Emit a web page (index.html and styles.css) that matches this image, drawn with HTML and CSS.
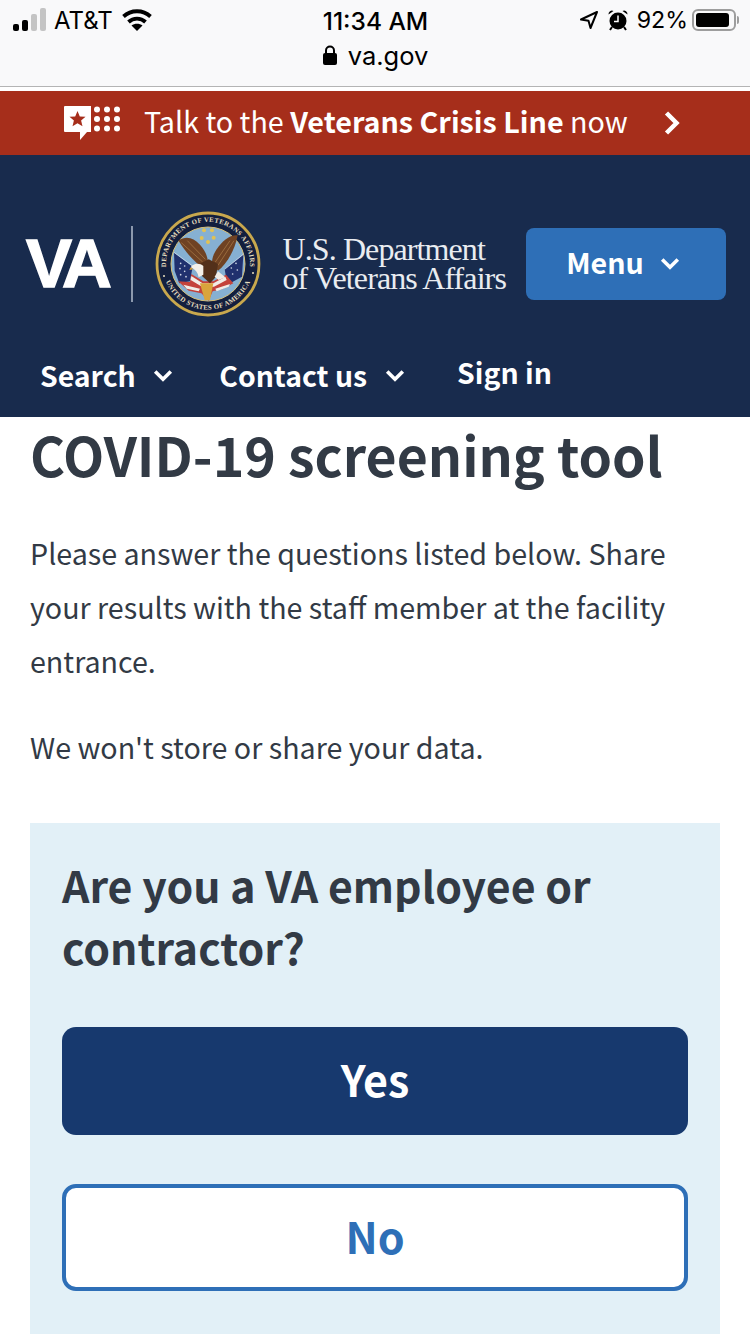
FILE: index.html
```html
<!DOCTYPE html>
<html lang="en">
<head>
<meta charset="utf-8">
<title>COVID-19 screening tool</title>
<link rel="stylesheet" href="styles.css">
</head>
<body>
<div class="browser-bar">
  <div class="status-row">
    <div class="status-left">
      <svg class="signal" width="36" height="24" viewBox="0 0 36 24"><rect x="0" y="16" width="6" height="7" rx="2" fill="#000"/><rect x="9" y="12" width="6" height="11" rx="2" fill="#000"/><rect x="18" y="6" width="6" height="17" rx="2" fill="#c4c4c4"/><rect x="27" y="0" width="6" height="23" rx="2" fill="#c4c4c4"/></svg>
      <span class="carrier">AT&amp;T</span>
      <svg class="wifi" width="30" height="24" viewBox="0 0 30 24"><path d="M1.500 8.500C9 1.500 21 1.500 28.500 8.500" fill="none" stroke="#000" stroke-width="3.800"/><path d="M6.500 14c4.800-4.500 12.200-4.500 17 0" fill="none" stroke="#000" stroke-width="3.800"/><path d="M15 23l-5.500-5.500c3-2.400 8-2.400 11 0z" fill="#000"/></svg>
    </div>
    <div class="clock">11:34 AM</div>
    <div class="status-right">
      <svg class="locate" width="20" height="20" viewBox="0 0 20 20"><path d="M18 2L2 9.500l7.500 1.200L11.500 18z" fill="none" stroke="#000" stroke-width="2" stroke-linejoin="round"/></svg>
      <svg class="alarm" width="22" height="22" viewBox="0 0 22 22"><circle cx="11" cy="12" r="8.500" fill="#000"/><path d="M11 6.500V12.500H7" fill="none" stroke="#fff" stroke-width="1.500"/><path d="M1.500 5.500a3.500 3.500 0 0 1 5-3.500zM20.500 5.500a3.500 3.500 0 0 0-5-3.500z" fill="#000"/><path d="M5 18l-2 3M17 18l2 3" stroke="#000" stroke-width="2"/></svg>
      <span class="battery-pct">92%</span>
      <span class="battery"><span class="battery-fill"></span></span>
      <span class="battery-cap"></span>
    </div>
  </div>
  <div class="url-row">
    <svg class="lock" width="16" height="22" viewBox="0 0 16 22"><path d="M4 10V6.500a4 4 0 0 1 8 0V10" fill="none" stroke="#000" stroke-width="2"/><rect x="1" y="9" width="14" height="12" rx="2" fill="#000"/></svg>
    <span>va.gov</span>
  </div>
</div>

<a class="crisis" href="#">
  <svg class="crisis-icon" width="58" height="36" viewBox="0 0 58 36"><path d="M1 2a1 1 0 0 1 1-1h26v26H24l-7 8v-8H2a1 1 0 0 1-1-1z" fill="#fff"/><path d="M14.500 6l2.300 5.400 5.700.4-4.400 3.700 1.400 5.700-5-3-5 3 1.400-5.700-4.400-3.700 5.700-.4z" fill="#a62e1b"/><g fill="#fff"><circle cx="34" cy="4.500" r="3"/><circle cx="44" cy="4.500" r="3"/><circle cx="54" cy="4.500" r="3"/><circle cx="34" cy="14" r="3"/><circle cx="44" cy="14" r="3"/><circle cx="54" cy="14" r="3"/><circle cx="34" cy="23.500" r="3"/><circle cx="44" cy="23.500" r="3"/><circle cx="54" cy="23.500" r="3"/></g></svg>
  <span class="crisis-text">Talk to the <b>Veterans Crisis Line</b> now</span>
  <svg class="crisis-chevron" width="18" height="26" viewBox="0 0 18 26"><path d="M3.500 3l10 10-10 10" fill="none" stroke="#fff" stroke-width="4.500"/></svg>
</a>

<header class="site-header">
  <div class="brand-row">
    <div class="brand">
      <span class="va-mark">VA</span>
      <span class="brand-rule"></span>
      <svg class="seal" width="106" height="106" viewBox="5 5 106 106">
        <defs>
          <path id="arc-top" d="M20.100 76A42 42 0 1 1 95.900 76"/>
          <path id="arc-bottom" d="M14 70A45.600 45.600 0 0 0 102 70"/>
        </defs>
        <circle cx="58" cy="58" r="52.500" fill="#131f3e"/>
        <circle cx="58" cy="58" r="51" fill="none" stroke="#c8a84e" stroke-width="2.800"/>
        <circle cx="58" cy="58" r="37" fill="#86b0d2" stroke="#d8c078" stroke-width="1"/>
        <text class="seal-text"><textPath href="#arc-top" startOffset="50%" text-anchor="middle">DEPARTMENT OF VETERANS AFFAIRS</textPath></text>
        <text class="seal-text"><textPath href="#arc-bottom" startOffset="50%" text-anchor="middle">UNITED STATES OF AMERICA</textPath></text>
        <circle cx="14" cy="70" r="1" fill="#e8dfc0"/>
        <circle cx="103" cy="67" r="1" fill="#e8dfc0"/>
        <g transform="scale(.3333)">
          <g fill="#e2c253"><circle cx="162" cy="73" r="6"/><circle cx="186" cy="73" r="6"/><circle cx="155" cy="96" r="6"/><circle cx="191" cy="95" r="6"/><circle cx="174" cy="108" r="6"/></g>
          <path d="M72 140L128 182 120 226 88 232 74 195z" fill="#20306e"/>
          <path d="M280 146L224 190 232 236 276 212z" fill="#20306e"/>
          <path d="M72 139L128 180" stroke="#dfe6ee" stroke-width="2" fill="none"/>
          <path d="M281 144L224 190" stroke="#dfe6ee" stroke-width="2" fill="none"/>
          <g fill="#d5dbe8"><circle cx="92" cy="172" r="2.500"/><circle cx="104" cy="180" r="2.500"/><circle cx="90" cy="188" r="2.500"/><circle cx="104" cy="196" r="2.500"/><circle cx="92" cy="206" r="2.500"/><circle cx="108" cy="212" r="2.500"/><circle cx="244" cy="186" r="2.500"/><circle cx="258" cy="172" r="2.500"/><circle cx="248" cy="204" r="2.500"/><circle cx="262" cy="192" r="2.500"/></g>
          <path d="M84 226L120 228 124 204 160 226 190 226 228 206 250 232 216 250 188 256 176 284 154 262 116 254z" fill="#c4423b"/>
          <path d="M124 210L158 232 190 232 226 212 230 222 192 242 156 242 122 222zM100 236L150 248 146 256 110 248zM196 248L240 234 236 242 200 256z" fill="#f1ece6"/>
          <path d="M85 103C110 88 130 95 150 116 164 132 172 148 174 168L160 188C140 172 110 146 85 103z" fill="#6f4223"/>
          <path d="M263 88C238 86 216 106 200 130 190 146 186 156 186 172L204 194C228 176 254 136 263 88z" fill="#6f4223"/>
          <path d="M94 110L158 168M112 104L166 160M240 104L196 168M252 104L204 178" stroke="#9a6b3e" stroke-width="3" fill="none"/>
          <path d="M148 174L176 160 204 174 198 212 180 232 156 210z" fill="#53301a"/>
          <path d="M122 184C130 170 150 170 160 180L160 206 146 214C144 200 136 190 122 184z" fill="#f4f0e9"/>
          <path d="M122 184l-4 8 12-2z" fill="#dfa534"/>
          <path d="M150 232L190 232 180 282 164 282z" fill="#d9a43b"/>
          <path d="M204 196L226 214 206 222 194 212z" fill="#f1ece6"/>
        </g>
      </svg>
      <div class="dept"><div>U.S. Department</div><div>of Veterans Affairs</div></div>
    </div>
    <button class="menu-btn" type="button"><span class="menu-label">Menu</span>
      <svg width="20" height="14" viewBox="0 0 20 14"><path d="M2.200 2.500L10 10.300 17.800 2.500" fill="none" stroke="#fff" stroke-width="3.600"/></svg>
    </button>
  </div>
  <nav class="nav-row">
    <a class="nav-item" href="#">Search
      <svg width="20" height="14" viewBox="0 0 20 14"><path d="M2.200 2.500L10 10.300 17.800 2.500" fill="none" stroke="#fff" stroke-width="3.600"/></svg>
    </a>
    <a class="nav-item" href="#">Contact us
      <svg width="20" height="14" viewBox="0 0 20 14"><path d="M2.200 2.500L10 10.300 17.800 2.500" fill="none" stroke="#fff" stroke-width="3.600"/></svg>
    </a>
    <a class="nav-item sign-in" href="#">Sign in</a>
  </nav>
</header>

<main class="content">
  <h1>COVID-19 screening tool</h1>
  <p class="intro">Please answer the questions listed below. Share your results with the staff member at the facility entrance.</p>
  <p class="note">We won't store or share your data.</p>
  <section class="question">
    <h2>Are you a VA employee or contractor?</h2>
    <button class="answer yes" type="button">Yes</button>
    <button class="answer no" type="button">No</button>
  </section>
</main>
</body>
</html>
```
FILE: styles.css
```css
* { box-sizing: border-box; }
html, body { margin: 0; padding: 0; }
body {
  width: 750px;
  height: 1334px;
  overflow: hidden;
  background: #fff;
  font-family: "Noto Sans CJK SC", "Source Sans Pro", "Open Sans", sans-serif;
  color: #323a45;
}
a { color: inherit; text-decoration: none; }

.browser-bar {
  height: 87px;
  background: #f9f9fa;
  border-bottom: 1px solid #b4b4b4;
  font-family: Inter, "Liberation Sans", sans-serif;
  color: #000;
  margin-bottom: 4px;
}
.status-row {
  height: 40px;
  padding: 0 11px 0 13px;
  display: grid;
  grid-template-columns: 1fr auto 1fr;
  align-items: center;
}
.status-left { display: flex; align-items: center; }
.signal { margin-right: 5px; }
.carrier { font-size: 24px; margin-right: 9px; }
.clock { font-size: 24.500px; font-weight: 500; padding: 2px 1px 0 0; }
.status-right { display: flex; align-items: center; justify-content: flex-end; }
.locate { margin-right: 8px; }
.alarm { margin-right: 7.500px; }
.battery-pct { font-size: 23.200px; margin-right: 4px; }
.battery {
  width: 44px; height: 22px;
  border: 2px solid #9d9d9d;
  border-radius: 6px;
  padding: 2px;
  display: block;
}
.battery-fill { display: block; height: 100%; width: 92%; background: #000; border-radius: 3px; }
.battery-cap { width: 2px; height: 8px; background: #9d9d9d; margin-left: 1px; border-radius: 0 2px 2px 0; }
.url-row {
  display: flex;
  justify-content: center;
  align-items: center;
  gap: 10px;
  font-size: 25.500px;
  height: 30px;
}

.crisis {
  height: 64px;
  background: #a62e1b;
  color: #fff;
  display: flex;
  align-items: center;
  padding-left: 63px;
}
.crisis-icon { margin-right: 23px; }
.crisis-text { font-size: 28.700px; line-height: 1; padding-bottom: 3px; }
.crisis-text b { font-weight: 700; }
.crisis-chevron { margin-left: 35px; }

.site-header { height: 262px; background: #182b4d; color: #fff; }
.brand-row {
  display: flex;
  align-items: center;
  padding: 56px 24px 0 26px;
  justify-content: space-between;
}
.brand { display: flex; align-items: center; }
.va-mark {
  font-family: "Liberation Sans", Arial, sans-serif;
  font-weight: 700;
  font-size: 69px;
  line-height: 72px;
  letter-spacing: -5px;
  width: 105px;
  -webkit-text-stroke: 1.500px #fff;
}
.brand-rule { width: 1.500px; height: 76px; background: #8c99ae; margin-right: 22.500px; }
.seal { display: block; margin-right: 21.500px; }
.seal-text { font-family: "Liberation Serif", serif; font-size: 6.800px; font-weight: 700; fill: #e8dfc0; letter-spacing: .35px; }
.dept {
  font-family: "Liberation Serif", serif;
  font-size: 32px;
  line-height: 29px;
  letter-spacing: -.900px;
  color: #e9ecf0;
  white-space: nowrap;
}
.menu-btn {
  width: 200px;
  height: 72px;
  background: #2e6fb7;
  border: 0;
  border-radius: 8px;
  color: #fff;
  font: 700 28.600px/1 "Noto Sans CJK SC", sans-serif;
  display: flex;
  align-items: center;
  justify-content: center;
  gap: 16px;
  padding: 0 6px 0 0;
}
.menu-label { padding-bottom: 4px; }
.nav-row {
  display: flex;
  align-items: center;
  padding: 36px 0 0 40px;
  font-weight: 700;
  font-size: 28.400px;
}
.nav-item { display: flex; align-items: center; gap: 17.500px; line-height: 44px; margin-right: 46px; }
.nav-item svg { margin-top: 2px; }
.sign-in { margin: -7px 0 0 6.500px; }

.content { padding: 0 30px; }
h1 {
  margin: 5px 0 0;
  font-size: 53.600px;
  line-height: 64px;
  font-weight: 700;
  color: #323a45;
}
.intro, .note {
  margin: 0;
  font-size: 28.650px;
  line-height: 54px;
  font-weight: 400;
}
.intro { margin-top: 40px; }
.note { margin-top: 32px; }
.question {
  margin-top: 49px;
  background: #e2f0f7;
  padding: 30px 32px 32px;
  height: 560px;
}
h2 {
  margin: 0 0 50px;
  font-size: 42.800px;
  line-height: 62px;
  font-weight: 700;
}
.answer {
  display: block;
  width: 100%;
  font: 700 43px/1 "Noto Sans CJK SC", sans-serif;
  border-radius: 14px;
}
.yes { height: 108px; background: #17396e; color: #fff; border: 0; margin-bottom: 49px; padding-bottom: 6px; }
.no { height: 107px; background: #fff; color: #2e6fb7; border: 4px solid #2e6fb7; padding-bottom: 6px; }
```
